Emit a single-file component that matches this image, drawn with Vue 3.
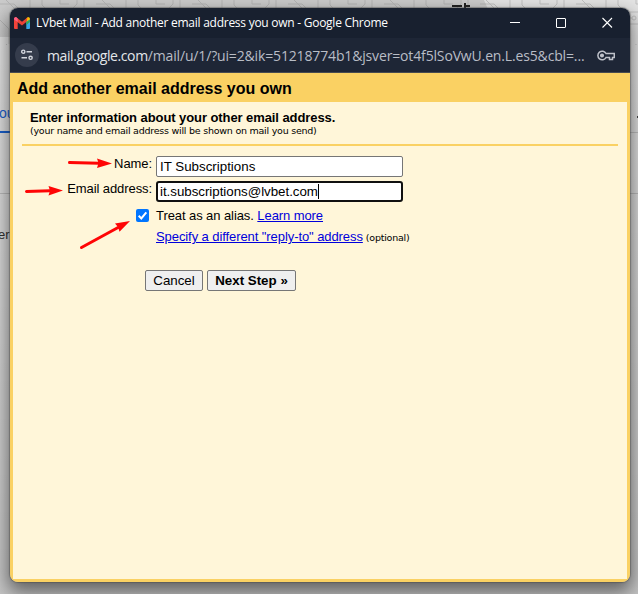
<template>
  <div class="desktop">
    <svg class="backdrop" width="638" height="594" viewBox="0 0 638 594">
      <defs>
        <pattern id="circuit" width="96" height="44" patternUnits="userSpaceOnUse">
          <g fill="none" stroke="#9f9f9f" stroke-width="1">
            <path d="M0 4h14l9 9v12M6 0l20 20h13M30 0v9l9 9h17M42 0v5l7 7h20l8-8V0M60 0v4h9M84 0v14l-8 8v10M96 8l-8 8v22M0 20l9 9v15M16 44V32l8-6M46 44V30l8-6h14" />
            <circle cx="23" cy="27" r="2" />
            <circle cx="58" cy="18" r="2" />
            <circle cx="76" cy="34" r="2" />
            <circle cx="70" cy="24" r="2" />
          </g>
        </pattern>
        <linearGradient id="shade" x1="0" x2="0" y1="0" y2="1">
          <stop offset="0" stop-color="#000" stop-opacity="0" />
          <stop offset="1" stop-color="#000" stop-opacity="0.14" />
        </linearGradient>
      </defs>
      <rect width="638" height="594" fill="#e4e4e4" />
      <rect width="638" height="37" fill="#cbcbcb" />
      <path d="M484 0h154v37H500z" fill="#e4e4e4" />
      <rect width="638" height="45" fill="url(#circuit)" opacity="0.5" />
      <path d="M452 6h10M464 6h6M465 3v5" stroke="#222" stroke-width="2" />
      <text class="tab-text" x="-1" y="118">ou</text>
      <path d="M0 132h10" stroke="#1a62d0" stroke-width="2" />
      <path d="M0 193.500h10M630 132.500h8M630 193.500h8" stroke="#c2c2c2" />
      <path d="M637 117h1" stroke="#444" stroke-width="2" />
      <text class="row-text" x="-2" y="239">er</text>
      <rect width="638" height="594" fill="url(#shade)" />
    </svg>

    <div class="window">
      <div class="title-bar">
        <svg class="gmail" width="16" height="12" viewBox="0 0 16 12">
          <path d="M0 2v9q0 1 1 1h2.700V4.500z" fill="#f0443a" />
          <path d="M12.300 4.500V12H15q1 0 1-1V2z" fill="#34a8e8" />
          <path d="M12.300 1.200V5L16 2.500V1.600Q15.700 0 14 0z" fill="#fbbc04" />
          <path d="M12.300 5v3L16 5V2.500z" fill="#34a853" />
          <path d="M0 1.600Q.3 0 2 0l6 4.800L13.500.4 12.300 5 8 8.400 0 2.500z" fill="#ea4335" />
          <path d="M0 2.500V1.500Q.4 0 2 0l1.700 1.400V5z" fill="#ff5e86" />
        </svg>
        <span class="title">LVbet Mail - Add another email address you own - Google Chrome</span>
        <svg class="controls" width="104" height="12" viewBox="0 0 104 12" fill="none" stroke="#fff">
          <path d="M0 5.500h10" />
          <rect x="46.500" y="1.500" width="9" height="9" rx="0.500" />
          <path d="M92.500 1l9.500 9.500M102 1l-9.500 9.500" stroke-width="1.100" />
        </svg>
      </div>

      <div class="url-bar">
        <span class="site-info">
          <svg width="12" height="12" viewBox="0 0 12 12" fill="none" stroke="#d3d6dd" stroke-width="1.400">
            <circle cx="2.300" cy="2.700" r="1.600" />
            <path d="M5.500 2.700H11M0.500 8.800H6" />
            <circle cx="9.600" cy="8.800" r="1.600" />
          </svg>
        </span>
        <span class="url"><span class="host">mail.google.com</span>{{ path }}</span>
        <svg class="key" width="18" height="11" viewBox="0 0 18 11" fill="none" stroke="#bfc2ca" stroke-width="1.500">
          <path d="M9 3.500A4.300 4.300 0 1 0 9 7.500h3.500v2h3v-2H17.300v-4z" />
          <circle cx="5" cy="5.500" r="1.300" fill="#bfc2ca" />
        </svg>
      </div>

      <div class="page">
        <h1>Add another email address you own</h1>
        <div class="content">
          <div class="intro">
            <b>Enter information about your other email address.</b>
            <small>(your name and email address will be shown on mail you send)</small>
          </div>
          <form @submit.prevent>
            <div class="row name-row">
              <label for="name">Name:</label>
              <input id="name" v-model="name" type="text" class="field" />
            </div>
            <div class="row email-row">
              <label for="email">Email address:</label>
              <div class="field focused">
                <span id="email" class="email">{{ email }}</span><i class="caret"></i>
              </div>
            </div>
            <div class="row alias-row">
              <span class="check" role="checkbox" :aria-checked="alias" @click="alias = !alias">
                <svg v-if="alias" width="13" height="13" viewBox="0 0 13 13">
                  <path d="M2.700 6.800l2.600 2.600 5-6" fill="none" stroke="#fff" stroke-width="2" />
                </svg>
              </span>
              <span class="alias-text">Treat as an alias. <a href="#">Learn more</a></span>
            </div>
            <div class="reply-row">
              <a href="#">Specify a different "reply-to" address</a>
              <small>(optional)</small>
            </div>
            <div class="buttons">
              <button type="button" class="cancel">Cancel</button>
              <button type="submit" class="next">Next Step »</button>
            </div>
          </form>
        </div>
      </div>
    </div>

    <!-- Annotation arrows over the form -->
    <svg class="arrows" width="638" height="594" viewBox="0 0 638 594">
      <g v-for="(arrow, index) in arrows" :key="index">
        <path :d="arrow.line" stroke="#ff0505" stroke-width="3" stroke-linecap="round" />
        <path :d="arrow.head" fill="#ff0505" />
      </g>
    </svg>
  </div>
</template>

<script setup>
import { ref } from 'vue'

const path = '/mail/u/1/?ui=2&ik=51218774b1&jsver=ot4f5lSoVwU.en.L.es5&cbl=...'

const name = ref('IT Subscriptions')
const email = ref('it.subscriptions@lvbet.com')
const alias = ref(true)

const arrows = [
  { line: 'M69.500 162.500L99 163.200', head: 'M112 163.500L97 158.500L98.500 163L97 168z' },
  { line: 'M26.500 191.400L50 190.800', head: 'M63 190.500L48.500 186L50 190.800L48.500 195.500z' },
  { line: 'M81.500 247.500L119 227', head: 'M130 221L115 223.500L118 227L119.500 231.800z' },
]
</script>

<style>
body {
  margin: 0;
  overflow: hidden;
}
</style>

<style scoped>
.desktop {
  position: relative;
  box-sizing: border-box;
  width: 638px;
  height: 594px;
  padding: 8px 8px 12px 10px;
  overflow: hidden;
  font-family: "Liberation Sans", Arial, sans-serif;
  font-size: 13px;
  color: #000;
}

.backdrop,
.arrows {
  position: absolute;
  top: 0;
  left: 0;
}

.arrows {
  pointer-events: none;
}

.tab-text {
  font-size: 14px;
  fill: #1a62d0;
}

.row-text {
  font-size: 13px;
  fill: #333;
}

.window {
  position: relative;
  display: flex;
  flex-direction: column;
  height: 574px;
  border-radius: 8px;
  overflow: hidden;
  box-shadow: 0 0 1px 1px rgba(70, 70, 70, 0.45), 0 8px 18px 2px rgba(0, 0, 0, 0.5);
}

.title-bar {
  display: flex;
  align-items: center;
  height: 30px;
  padding-left: 4px;
  background: #18202f;
}

.title {
  flex: 1;
  margin-left: 6px;
  font: 12px/30px "Open Sans", "Noto Sans", sans-serif;
  letter-spacing: -0.26px;
  white-space: nowrap;
  color: #fff;
}

.controls {
  margin-right: 16px;
}

.url-bar {
  display: flex;
  align-items: center;
  box-sizing: border-box;
  height: 35px;
  padding: 0 15px 0 5px;
  border-bottom: 1px solid #474b50;
  background: #1e2636;
}

.site-info {
  display: flex;
  flex: none;
  align-items: center;
  justify-content: center;
  width: 24px;
  height: 24px;
  border-radius: 50%;
  background: #353c4c;
}

.url {
  flex: 1;
  margin-left: 8px;
  font: 14px/35px "Open Sans", "Noto Sans", sans-serif;
  letter-spacing: -0.15px;
  white-space: nowrap;
  color: #b9bdc6;
}

.host {
  letter-spacing: -0.4px;
  color: #e4e6ea;
}

.key {
  flex: none;
}

.page {
  display: flex;
  flex: 1;
  flex-direction: column;
  padding: 0 3px 3px;
  background: #fad163;
}

h1 {
  height: 29px;
  margin: 0;
  padding-left: 4px;
  font-size: 16px;
  line-height: 31px;
  white-space: nowrap;
}

.content {
  flex: 1;
  padding: 0 9px;
  background: #fff6d9;
  letter-spacing: -0.08px;
}

.intro {
  display: flex;
  flex-direction: column;
  box-sizing: border-box;
  height: 44px;
  padding: 8px 0 0 8px;
  border-bottom: 2px solid #fad163;
  white-space: nowrap;
}

.intro b {
  line-height: 15px;
}

small {
  font: 9.500px/12px "DejaVu Sans", Verdana, sans-serif;
  letter-spacing: -0.24px;
}

.row {
  display: flex;
}

.name-row {
  padding-top: 10px;
}

.email-row {
  padding-top: 4px;
}

.row label {
  width: 130px;
  margin-right: 4px;
  line-height: 15px;
  text-align: right;
  white-space: nowrap;
}

.field {
  display: flex;
  align-items: center;
  box-sizing: border-box;
  width: 247px;
  height: 21px;
  padding: 0 3px 1px;
  border: 1px solid #767676;
  border-radius: 2px;
  outline: none;
  background: #fff;
  font: 13.333px "Liberation Sans", Arial, sans-serif;
  color: #000;
}

.focused {
  padding: 0 2px 1px;
  border: 2px solid #101010;
  border-radius: 3px;
  letter-spacing: -0.03px;
}

.caret {
  width: 1px;
  height: 15px;
  background: #000;
}

.alias-row {
  align-items: center;
  padding: 6px 0 0 114px;
  line-height: 15px;
}

.check {
  width: 13px;
  height: 13px;
  border-radius: 2px;
  background: #0075ff;
}

.check svg {
  display: block;
}

.alias-text {
  margin-left: 7px;
}

a {
  color: #0000dc;
}

.reply-row {
  display: flex;
  align-items: baseline;
  gap: 3px;
  height: 15px;
  padding: 6px 0 0 134px;
  line-height: 15px;
  white-space: nowrap;
}

.buttons {
  display: flex;
  gap: 4px;
  padding: 26px 0 0 123px;
}

button {
  box-sizing: border-box;
  height: 21px;
  padding: 0;
  border: 1px solid #767676;
  border-radius: 2px;
  background: #efefef;
  font: 13.333px "Liberation Sans", Arial, sans-serif;
  color: #000;
}

.cancel {
  width: 58px;
}

.next {
  width: 89px;
  font-weight: bold;
}
</style>
